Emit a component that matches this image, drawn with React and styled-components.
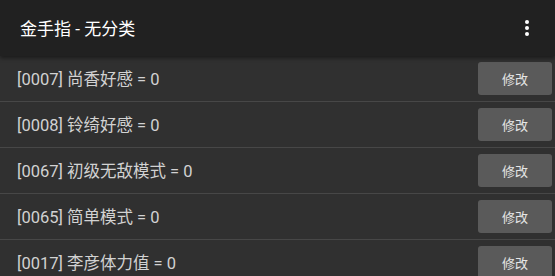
import styled, { createGlobalStyle } from "styled-components";

const Global = createGlobalStyle`
  html, body { margin: 0; padding: 0; background: #303030; }
  body { font-family: Roboto, "Noto Sans CJK SC", sans-serif; }
`;

const items = [
  { id: "0007", name: "尚香好感", value: 0 },
  { id: "0008", name: "铃绮好感", value: 0 },
  { id: "0067", name: "初级无敌模式", value: 0 },
  { id: "0065", name: "简单模式", value: 0 },
  { id: "0017", name: "李彦体力值", value: 0 },
];

export default function App() {
  return (
    <Page>
      <Global />
      <Toolbar>
        <Title>金手指 - 无分类</Title>
        <MenuButton aria-label="more">
          <Dot />
          <Dot />
          <Dot />
        </MenuButton>
      </Toolbar>
      <List>
        {items.map((it) => (
          <Row key={it.id}>
            <Label>
              [{it.id}] {it.name} = {it.value}
            </Label>
            <EditButton>修改</EditButton>
          </Row>
        ))}
      </List>
    </Page>
  );
}

const Page = styled.div`
  width: 555px;
  height: 276px;
  overflow: hidden;
  background: #303030;
`;

const Toolbar = styled.header`
  position: relative;
  z-index: 1;
  height: 56px;
  display: flex;
  align-items: center;
  justify-content: space-between;
  padding: 0 20px 0 20px;
  background: #212121;
  box-shadow: 0 2px 4px rgba(0, 0, 0, 0.45);
`;

const Title = styled.h1`
  margin: 0 0 1px;
  font-size: 17px;
  font-weight: 400;
  color: #ffffff;
`;

const MenuButton = styled.div`
  display: flex;
  flex-direction: column;
  align-items: center;
  gap: 2px;
  margin-right: 6px;
`;

const Dot = styled.span`
  width: 4px;
  height: 4px;
  border-radius: 50%;
  background: #ffffff;
`;

const List = styled.div`
  display: flex;
  flex-direction: column;
`;

const Row = styled.div`
  height: 45px;
  display: flex;
  align-items: center;
  justify-content: space-between;
  padding: 0 3px 0 17px;
  border-bottom: 1px solid #474747;
`;

const Label = styled.span`
  font-size: 16.5px;
  color: #d2d2d2;
  margin-bottom: 2px;
`;

const EditButton = styled.button`
  width: 74px;
  height: 33px;
  border: none;
  border-radius: 3px;
  background: #5a5a5a;
  color: #e6e6e6;
  font-family: Roboto, "Noto Sans CJK SC", sans-serif;
  font-size: 13px;
  padding: 0;
`;
